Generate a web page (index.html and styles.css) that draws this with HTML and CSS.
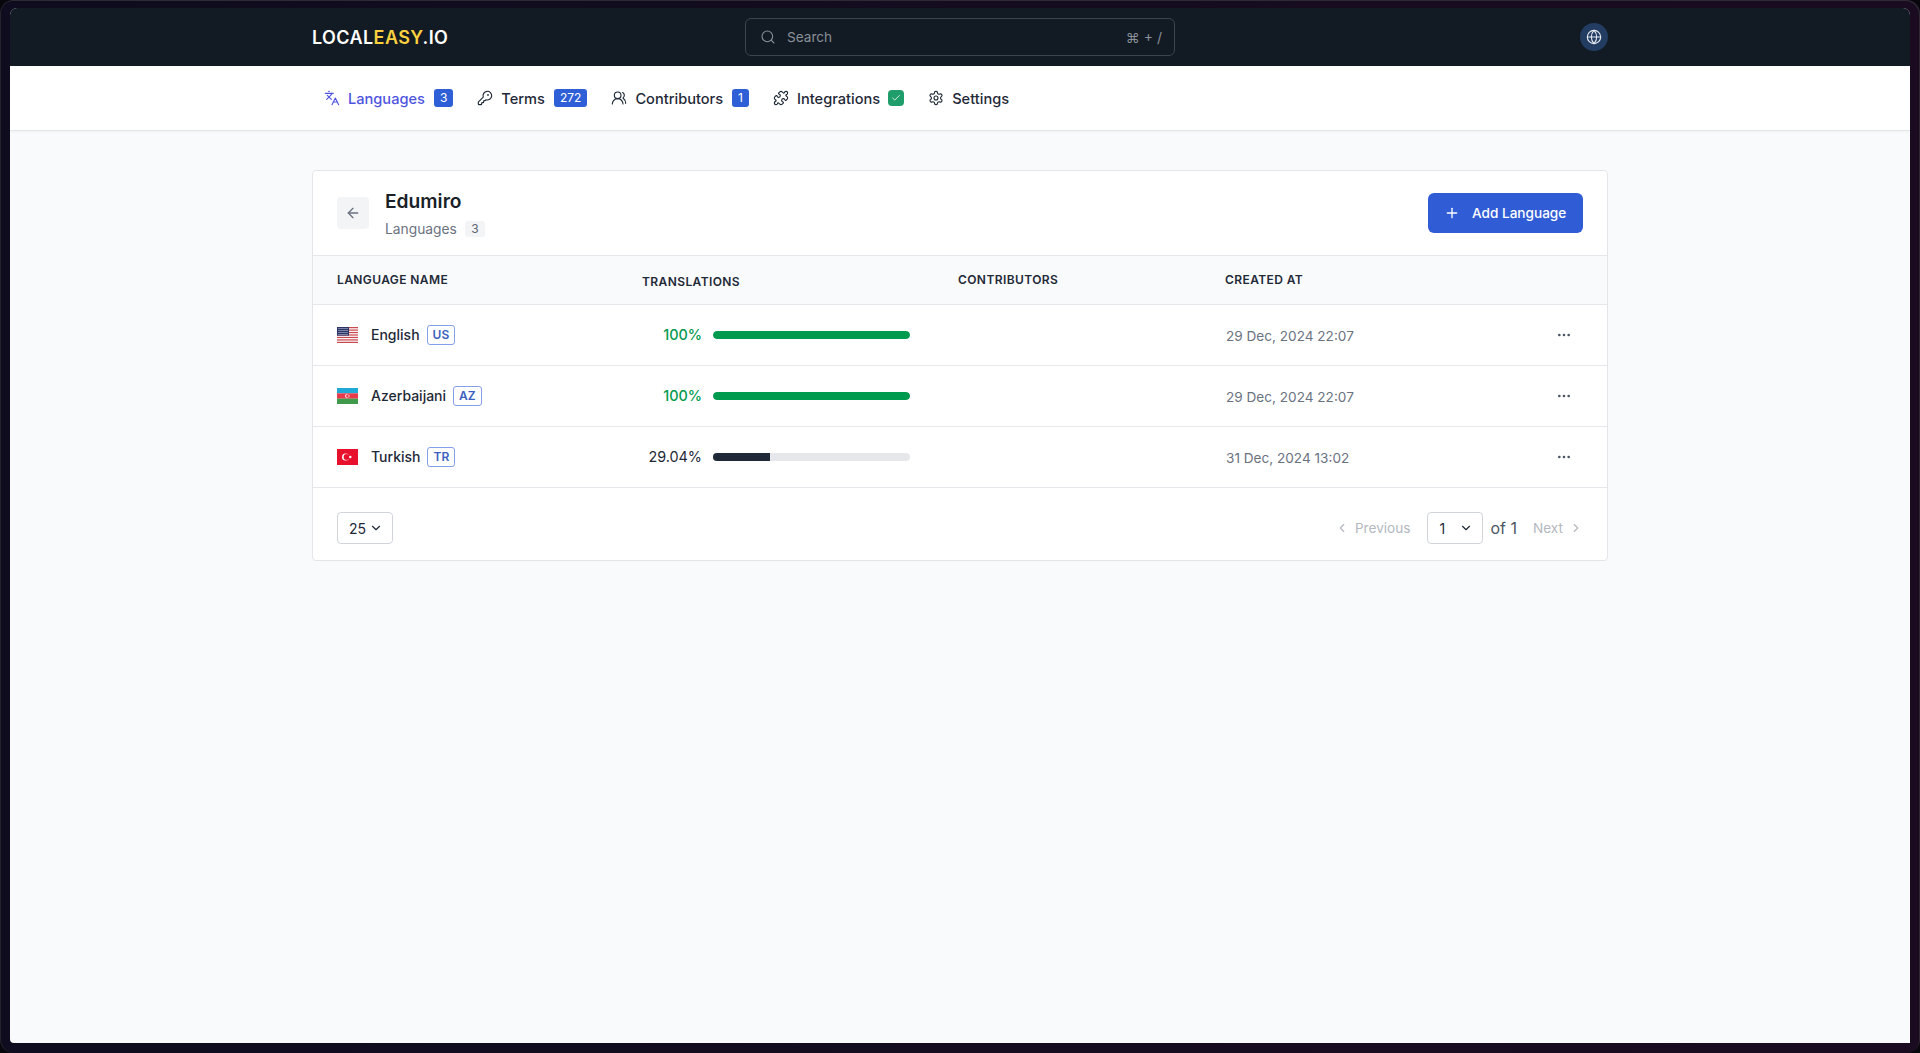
FILE: index.html
```html
<!DOCTYPE html>
<html lang="en">
<head>
<meta charset="utf-8">
<title>LocalEasy</title>
<link rel="stylesheet" href="styles.css">
</head>
<body>
<div class="frame">
<div class="page">
  <header class="topbar">
    <div class="container topbar-row">
      <div class="logo">LOCAL<span class="logo-accent">EASY</span>.IO</div>
      <div class="search">
        <svg class="icon-search" viewBox="0 0 24 24"><circle cx="11" cy="11" r="8"/><path d="m21 21-4.3-4.3"/></svg>
        <span class="search-text">Search</span>
        <span class="search-key">⌘ + /</span>
      </div>
      <div class="avatar">
        <svg class="icon" viewBox="0 0 24 24"><circle cx="12" cy="12" r="10"/><path d="M12 2a14.5 14.5 0 0 0 0 20 14.5 14.5 0 0 0 0-20"/><path d="M2 12h20"/></svg>
      </div>
    </div>
  </header>
  <nav class="tabs">
    <div class="container tabs-row">
      <a class="tab tab-active">
        <svg class="icon" viewBox="0 0 24 24"><path d="m5 8 6 6"/><path d="m4 14 6-6 2-3"/><path d="M2 5h12"/><path d="M7 2h1"/><path d="m22 22-5-10-5 10"/><path d="M14 18h6"/></svg>
        <span class="tab-label">Languages</span><span class="count">3</span>
      </a>
      <a class="tab">
        <svg class="icon" viewBox="0 0 24 24"><path d="M2.586 17.414A2 2 0 0 0 2 18.828V21a1 1 0 0 0 1 1h3a1 1 0 0 0 1-1v-1a1 1 0 0 1 1-1h1a1 1 0 0 0 1-1v-1a1 1 0 0 1 1-1h.172a2 2 0 0 0 1.414-.586l.814-.814a6.5 6.5 0 1 0-4-4z"/><circle cx="16.5" cy="7.5" r=".5"/></svg>
        <span class="tab-label">Terms</span><span class="count">272</span>
      </a>
      <a class="tab">
        <svg class="icon" viewBox="0 0 24 24"><path d="M18 21a8 8 0 0 0-16 0"/><circle cx="10" cy="8" r="5"/><path d="M22 20c0-3.37-2-6.5-4-8a5 5 0 0 0-.45-8.3"/></svg>
        <span class="tab-label">Contributors</span><span class="count">1</span>
      </a>
      <a class="tab">
        <svg class="icon" viewBox="0 0 24 24"><path d="M15.39 4.39a1 1 0 0 0 1.68-.474 2.5 2.5 0 1 1 3.014 3.015 1 1 0 0 0-.474 1.68l1.683 1.682a2.414 2.414 0 0 1 0 3.414L19.61 15.39a1 1 0 0 1-1.68-.474 2.5 2.5 0 1 0-3.014 3.015 1 1 0 0 1 .474 1.68l-1.683 1.682a2.414 2.414 0 0 1-3.414 0L8.61 19.61a1 1 0 0 0-1.68.474 2.5 2.5 0 1 1-3.014-3.015 1 1 0 0 0 .474-1.68l-1.683-1.682a2.414 2.414 0 0 1 0-3.414L4.39 8.61a1 1 0 0 1 1.68.474 2.5 2.5 0 1 0 3.014-3.015 1 1 0 0 1-.474-1.68l1.683-1.682a2.414 2.414 0 0 1 3.414 0z"/></svg>
        <span class="tab-label">Integrations</span>
        <span class="check"><svg viewBox="0 0 24 24"><path d="M20 6 9 17l-5-5"/></svg></span>
      </a>
      <a class="tab">
        <svg class="icon" viewBox="0 0 24 24"><path d="M12.22 2h-.44a2 2 0 0 0-2 2v.18a2 2 0 0 1-1 1.73l-.43.25a2 2 0 0 1-2 0l-.15-.08a2 2 0 0 0-2.73.73l-.22.38a2 2 0 0 0 .73 2.73l.15.1a2 2 0 0 1 1 1.72v.51a2 2 0 0 1-1 1.74l-.15.09a2 2 0 0 0-.73 2.73l.22.38a2 2 0 0 0 2.73.73l.15-.08a2 2 0 0 1 2 0l.43.25a2 2 0 0 1 1 1.73V20a2 2 0 0 0 2 2h.44a2 2 0 0 0 2-2v-.18a2 2 0 0 1 1-1.73l.43-.25a2 2 0 0 1 2 0l.15.08a2 2 0 0 0 2.73-.73l.22-.39a2 2 0 0 0-.73-2.73l-.15-.08a2 2 0 0 1-1-1.74v-.5a2 2 0 0 1 1-1.74l.15-.09a2 2 0 0 0 .73-2.73l-.22-.38a2 2 0 0 0-2.73-.73l-.15.08a2 2 0 0 1-2 0l-.43-.25a2 2 0 0 1-1-1.73V4a2 2 0 0 0-2-2z"/><circle cx="12" cy="12" r="3"/></svg>
        <span class="tab-label">Settings</span>
      </a>
    </div>
  </nav>
  <main class="container content">
    <section class="card">
      <div class="card-head">
        <div class="head-left">
          <button class="back"><svg class="icon" viewBox="0 0 24 24"><path d="m12 19-7-7 7-7"/><path d="M19 12H5"/></svg></button>
          <div>
            <h1 class="title">Edumiro</h1>
            <div class="subtitle">Languages <span class="sub-count">3</span></div>
          </div>
        </div>
        <button class="add"><svg class="icon" viewBox="0 0 24 24"><path d="M5 12h14"/><path d="M12 5v14"/></svg>Add Language</button>
      </div>
      <div class="row row-head">
        <div>Language name</div>
        <div class="th-low">Translations</div>
        <div>Contributors</div>
        <div>Created at</div>
      </div>
      <div class="row">
        <div class="lang">
          <svg class="flag" viewBox="0 0 21 16">
            <rect width="21" height="16" fill="#fff"/>
            <g fill="#c8484f"><rect width="21" height="1.23"/><rect y="2.46" width="21" height="1.23"/><rect y="4.92" width="21" height="1.23"/><rect y="7.38" width="21" height="1.23"/><rect y="9.85" width="21" height="1.23"/><rect y="12.31" width="21" height="1.23"/><rect y="14.77" width="21" height="1.23"/></g>
            <rect width="12" height="8.6" fill="#2b3566"/>
            <g fill="#8f96b8"><rect x="1" y="1" width="10" height=".8"/><rect x="1" y="3" width="10" height=".8"/><rect x="1" y="5" width="10" height=".8"/><rect x="1" y="7" width="10" height=".8"/></g>
          </svg>
          <span class="lang-name">English</span><span class="code">US</span>
        </div>
        <div class="progress">
          <span class="pct pct-done">100%</span>
          <div class="track"><div class="fill fill-done" style="width:100%"></div></div>
        </div>
        <div></div>
        <div class="date">29 Dec, 2024 22:07</div>
        <button class="more"><svg class="icon" viewBox="0 0 24 24"><circle cx="12" cy="12" r="1"/><circle cx="19" cy="12" r="1"/><circle cx="5" cy="12" r="1"/></svg></button>
      </div>
      <div class="row">
        <div class="lang">
          <svg class="flag" viewBox="0 0 21 16">
            <rect width="21" height="5.34" fill="#1fa9d6"/><rect y="5.33" width="21" height="5.34" fill="#e8394a"/><rect y="10.66" width="21" height="5.34" fill="#3f9a4b"/>
            <circle cx="10.2" cy="8" r="2.1" fill="#fff"/><circle cx="10.8" cy="8" r="1.7" fill="#e8394a"/><circle cx="12" cy="8" r=".7" fill="#fff"/>
          </svg>
          <span class="lang-name">Azerbaijani</span><span class="code">AZ</span>
        </div>
        <div class="progress">
          <span class="pct pct-done">100%</span>
          <div class="track"><div class="fill fill-done" style="width:100%"></div></div>
        </div>
        <div></div>
        <div class="date">29 Dec, 2024 22:07</div>
        <button class="more"><svg class="icon" viewBox="0 0 24 24"><circle cx="12" cy="12" r="1"/><circle cx="19" cy="12" r="1"/><circle cx="5" cy="12" r="1"/></svg></button>
      </div>
      <div class="row">
        <div class="lang">
          <svg class="flag" viewBox="0 0 21 16">
            <rect width="21" height="16" fill="#e8112d"/>
            <circle cx="8.6" cy="8" r="3.6" fill="#fff"/><circle cx="9.5" cy="8" r="2.9" fill="#e8112d"/><circle cx="13.3" cy="8" r="1.2" fill="#fff"/>
          </svg>
          <span class="lang-name">Turkish</span><span class="code">TR</span>
        </div>
        <div class="progress">
          <span class="pct">29.04%</span>
          <div class="track"><div class="fill" style="width:29.04%"></div></div>
        </div>
        <div></div>
        <div class="date">31 Dec, 2024 13:02</div>
        <button class="more"><svg class="icon" viewBox="0 0 24 24"><circle cx="12" cy="12" r="1"/><circle cx="19" cy="12" r="1"/><circle cx="5" cy="12" r="1"/></svg></button>
      </div>
      <div class="card-foot">
        <div class="select select-size">25<svg class="chev" viewBox="0 0 24 24"><path d="m6 9 6 6 6-6"/></svg></div>
        <div class="pager">
          <span class="pager-link"><svg class="chev" viewBox="0 0 24 24"><path d="m15 18-6-6 6-6"/></svg>Previous</span>
          <div class="select select-page">1<svg class="chev" viewBox="0 0 24 24"><path d="m6 9 6 6 6-6"/></svg></div>
          <span class="of">of 1</span>
          <span class="pager-link">Next<svg class="chev" viewBox="0 0 24 24"><path d="m9 18 6-6-6-6"/></svg></span>
        </div>
      </div>
    </section>
  </main>
</div>
</div>
</body>
</html>
```
FILE: styles.css
```css
* { box-sizing: border-box; }
html, body { margin: 0; height: 100%; background: #08070d; overflow: hidden; }
body { font-family: Inter, "Liberation Sans", sans-serif; font-size: 14px; color: #1f2937; }
button { font: inherit; border: 0; padding: 0; background: none; color: inherit; }
svg { display: block; fill: none; stroke: currentColor; stroke-width: 2; stroke-linecap: round; stroke-linejoin: round; flex: none; }
.icon { width: 16px; height: 16px; }

.frame { height: 1053px; padding: 8px 10px 10px; border-radius: 14px; background: linear-gradient(90deg, #0e0c1e, #1a0b20); box-shadow: inset -1px 1px 0 #2e2a33, inset 1px 0 0 #25232c; }
.page { height: 100%; background: #f9fafb; border-radius: 7px 7px 0 4px; overflow: hidden; }
.container { width: 1296px; margin: 0 auto; }

.topbar { height: 58px; background: #121a23; }
.topbar-row { height: 100%; display: flex; align-items: center; justify-content: space-between; }
.logo { width: 136px; padding-top: 1px; font-size: 18px; font-weight: 600; letter-spacing: 0.4px; color: #fff; }
.logo-accent { color: #fbd13f; }
.search { width: 430px; height: 38px; margin-left: 297px; margin-right: 405px; padding: 0 12px 0 14px; display: flex; align-items: center; border: 1px solid #3d4450; border-radius: 6px; color: #8a9099; font-size: 13.6px; }
.icon-search { width: 16px; height: 16px; margin-right: 11px; stroke-width: 1.6; }
.search-text { flex: 1; padding-bottom: 1px; }
.search-key { font-size: 14px; }
.avatar { width: 28px; height: 28px; border-radius: 50%; background: #233c62; color: #e5e9f0; display: flex; align-items: center; justify-content: center; }
.avatar svg { stroke-width: 1.7; }

.tabs { height: 65px; background: #fff; border-bottom: 1px solid #e1e4e8; box-shadow: 0 1px 2px rgba(0,0,0,.04); }
.tabs-row { height: 100%; display: flex; align-items: center; }
.tab { display: flex; align-items: center; padding: 0 12px; font-size: 14.6px; font-weight: 500; color: #1f2937; }
.tab > .icon { margin-right: 8px; stroke-width: 1.7; }
.tab-label { padding-top: 2px; }
.tab-active { color: #4f54e0; }
.count { height: 18px; margin-left: 9px; padding: 0 6px; border-radius: 3px; background: #2f5fd6; color: #fff; font-size: 12px; font-weight: 400; line-height: 18px; text-align: center; }
.check { width: 16px; height: 16px; margin-left: 8px; border-radius: 4px; background: #1f9d6b; color: #fff; display: flex; align-items: center; justify-content: center; }
.check svg { width: 10px; height: 10px; }

.content { padding-top: 39px; }
.card { background: #fff; border: 1px solid #e3e5e9; border-radius: 4px; }
.card-head { height: 84px; padding: 0 24px; display: flex; align-items: center; justify-content: space-between; }
.head-left { display: flex; align-items: center; gap: 16px; }
.back { width: 32px; height: 32px; border-radius: 4px; background: #f3f4f6; color: #6b7280; display: flex; align-items: center; justify-content: center; }
.title { margin: 0 0 4px; font-size: 19.2px; line-height: 28px; font-weight: 600; color: #1a1f28; }
.subtitle { display: flex; align-items: center; gap: 8px; font-size: 13.8px; line-height: 20px; color: #6b7280; }
.sub-count { width: 20px; height: 16px; background: #f3f4f6; border-radius: 3px; font-size: 12px; line-height: 16px; text-align: center; color: #5f6672; }
.add { width: 155px; height: 40px; padding-left: 16px; display: flex; align-items: center; gap: 12px; border-radius: 6px; background: #305dd5; color: #fff; font-size: 13.6px; font-weight: 500; }

.row { height: 61px; padding-right: 35px; display: grid; grid-template-columns: 305px 316px 267px 1fr auto; align-items: center; border-top: 1px solid #e5e7eb; }
.row > div:first-child { padding-left: 24px; }
.row-head { height: 49px; padding-bottom: 2px; background: #f9fafb; font-size: 12px; font-weight: 600; letter-spacing: 0.4px; text-transform: uppercase; color: #1f2937; }
.row-head > div { padding-left: 24px; }
.th-low { margin-top: 4px; }
.lang { display: flex; align-items: center; font-weight: 500; color: #1f2937; }
.flag { width: 21px; height: 16px; margin-right: 13px; stroke: none; }
.lang-name { padding-bottom: 2px; }
.code { height: 20px; margin-left: 7px; padding: 0 5px; border: 1px solid #84a0ea; border-radius: 3px; font-size: 12px; font-weight: 600; line-height: 18px; color: #3b5fc0; }
.progress { display: flex; align-items: center; padding-left: 24px; }
.pct { width: 60px; margin-right: 11px; padding-bottom: 2px; font-size: 14.4px; text-align: right; }
.pct-done { color: #059a4f; font-weight: 500; }
.track { width: 197px; height: 8px; border-radius: 4px; background: #e5e7eb; overflow: hidden; }
.fill { height: 100%; background: #1f2937; }
.fill-done { background: #009a4e; border-radius: 4px; }
.date { padding-left: 25px; padding-top: 1px; font-size: 13.6px; color: #6b7280; }
.more { color: #4b5563; }

.card-foot { height: 73px; padding: 24px 24px 0; display: flex; align-items: flex-start; justify-content: space-between; border-top: 1px solid #e5e7eb; }
.select { height: 32px; padding: 0 9px 0 11px; display: flex; align-items: center; justify-content: space-between; border: 1px solid #d1d5db; border-radius: 4px; color: #1f2937; }
.select-size { width: 56px; }
.select-page { width: 56px; margin: 0 7px 0 17px; }
.chev { width: 14px; height: 14px; }
.pager { display: flex; align-items: center; }
.pager-link { display: flex; align-items: center; gap: 6px; color: #b4b8c0; font-size: 13.6px; }
.of { margin-right: 16px; font-size: 16px; color: #4b5563; }
```
